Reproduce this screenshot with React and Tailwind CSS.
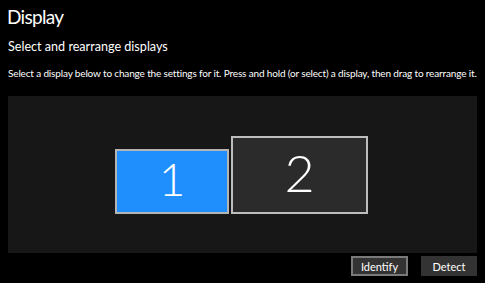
export default function App() {
  return (
    <div className="w-[485px] h-[283px] overflow-hidden bg-black text-white px-[8px] font-['Lato',sans-serif]">
      <h1 className="pt-[5px] text-[19px] leading-[24px] font-normal tracking-[-0.7px] -ml-[1px]">Display</h1>
      <h2 className="mt-[10px] text-[12.6px] leading-[16px] font-normal">Select and rearrange displays</h2>
      <p className="mt-[11px] text-[10px] leading-[14px] whitespace-nowrap tracking-[-0.15px]">
        Select a display below to change the settings for it. Press and hold (or select) a display, then drag to rearrange it.
      </p>
      <div className="mt-[16px] h-[157px] bg-[#171717] flex items-center justify-center">
        <div className="flex items-end gap-[2px] -ml-[2px]">
          <div className="w-[114px] h-[65px] bg-[#1e8ffd] border-2 border-[#b4b4b4] flex items-center justify-center pb-[5px]">
            <span className="text-[46px] leading-none font-light">1</span>
          </div>
          <div className="w-[137px] h-[78px] bg-[#2b2b2b] border-2 border-[#bdbdbd] flex items-center justify-center pb-[5px]">
            <span className="text-[52px] leading-none font-light">2</span>
          </div>
        </div>
      </div>
      <div className="mt-[3px] flex justify-end gap-[13px]">
        <button className="w-[57px] h-[20px] bg-[#333333] border-2 border-[#7a7a7a] text-[11px] leading-none text-white flex items-center justify-center">
          Identify
        </button>
        <button className="w-[56px] h-[20px] bg-[#333333] text-[11px] leading-none text-white flex items-center justify-center">
          Detect
        </button>
      </div>
    </div>
  );
}
